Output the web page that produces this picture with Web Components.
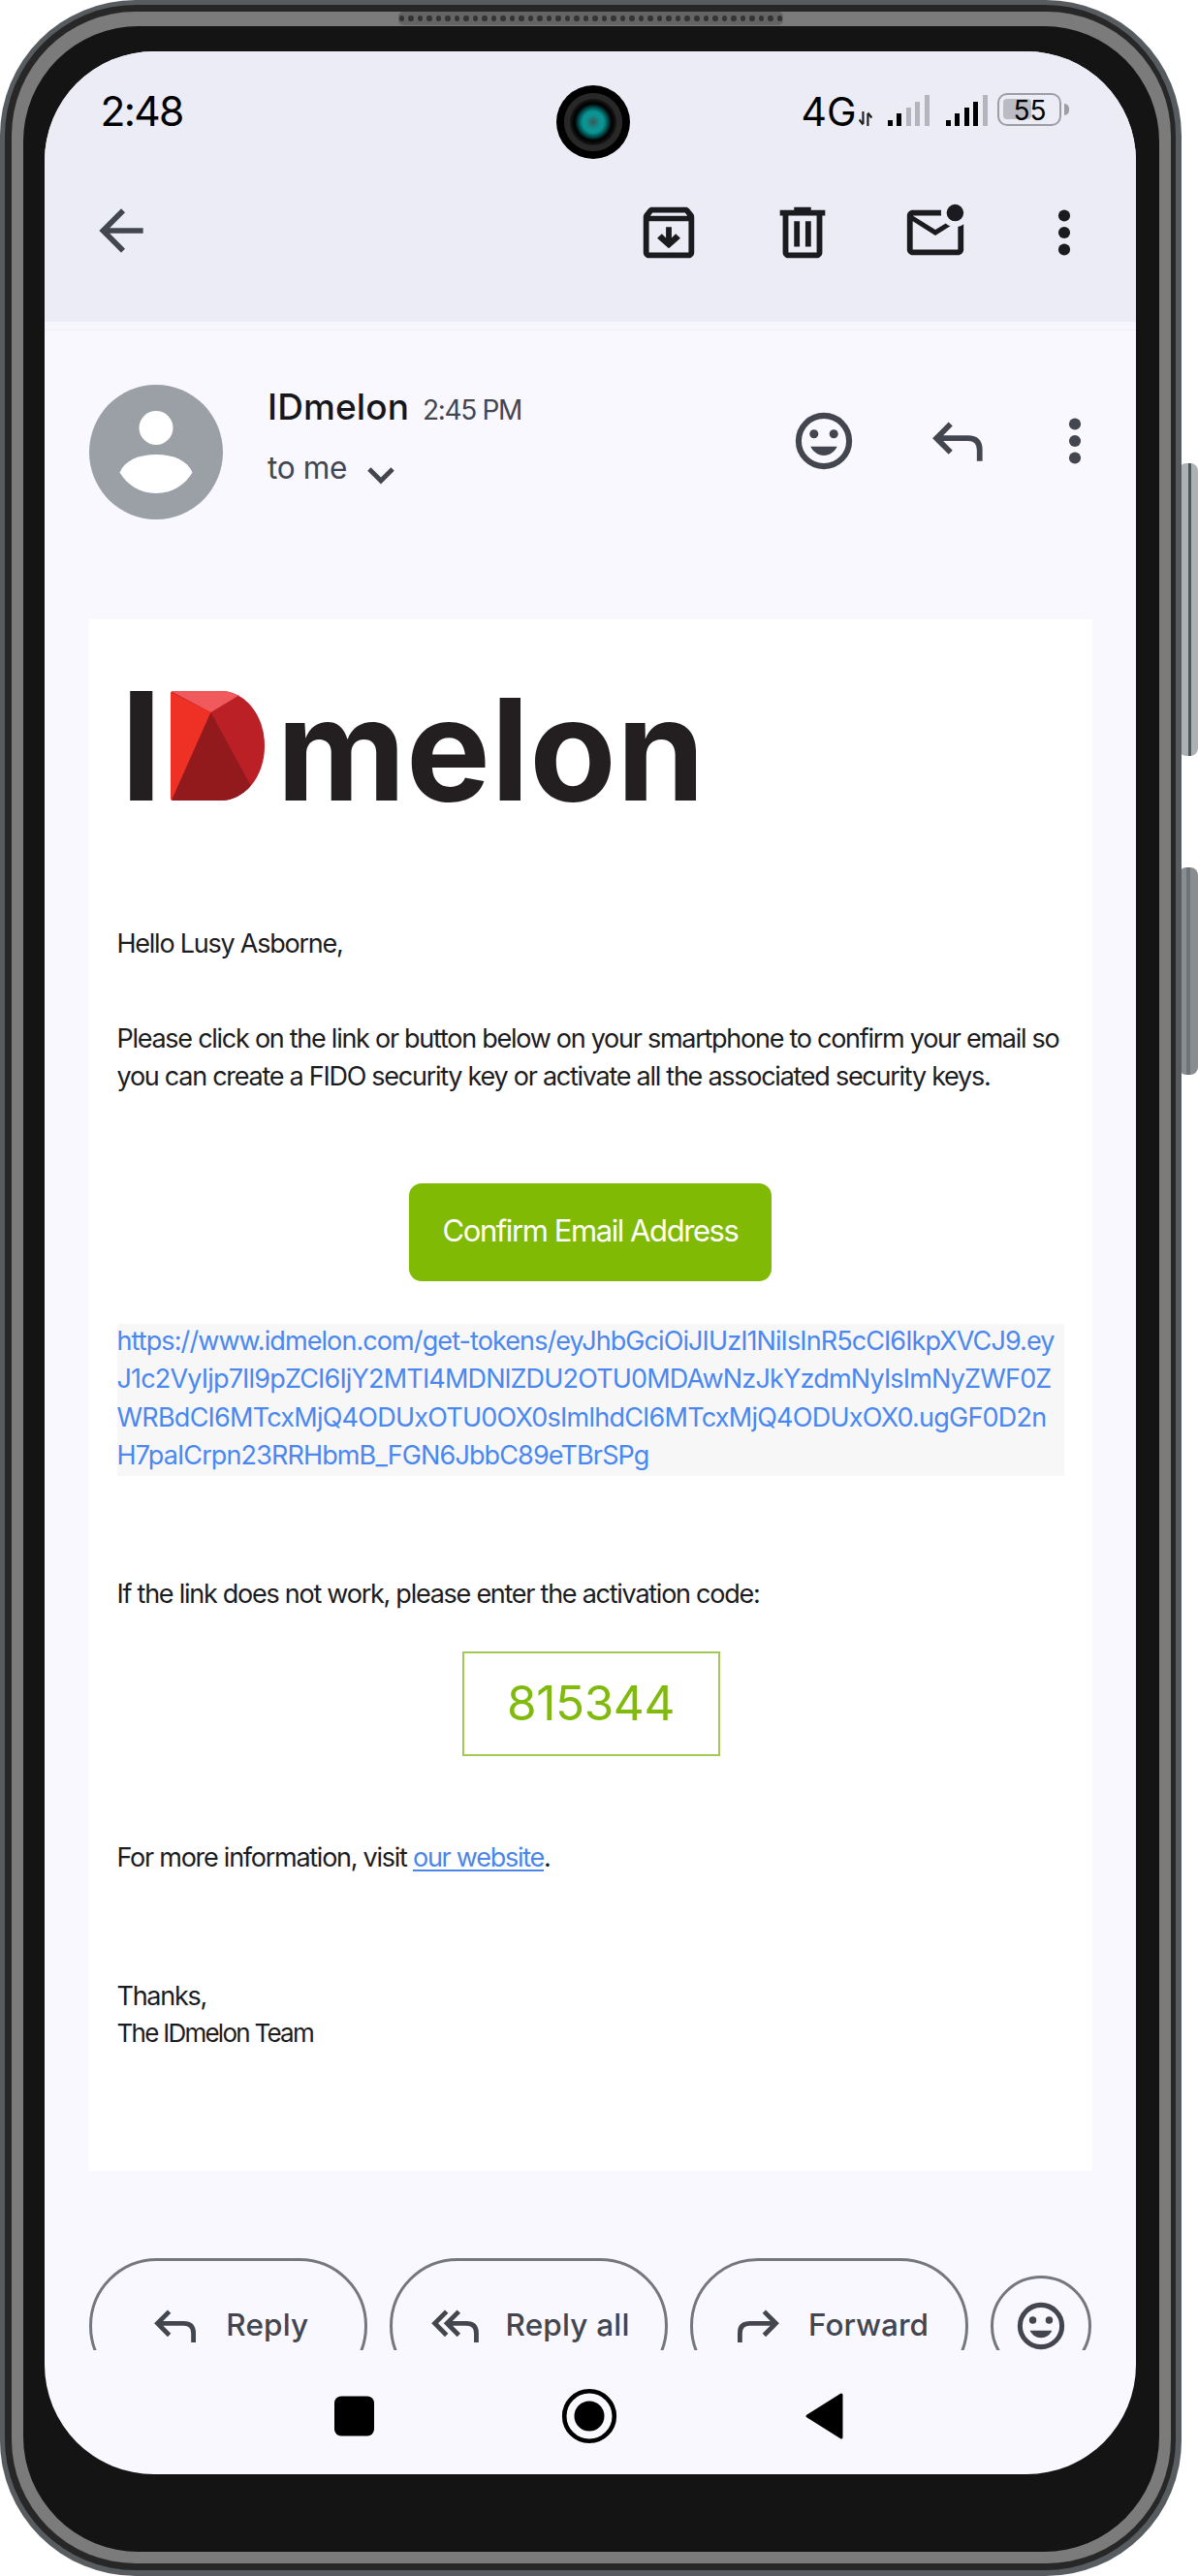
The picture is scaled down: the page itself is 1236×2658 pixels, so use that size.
<!DOCTYPE html>
<html lang="en">
<head>
<meta charset="utf-8">
<title>IDmelon mail</title>
<style>
html,body{margin:0;background:#fff}
body{font-family:Inter,"Liberation Sans",sans-serif;width:1236px;height:2658px;overflow:hidden}
</style>
</head>
<body>
<phone-frame>
  <status-bar></status-bar>
  <app-bar></app-bar>
  <message-head></message-head>
  <mail-card></mail-card>
  <reply-bar></reply-bar>
  <nav-bar></nav-bar>
</phone-frame>
<script>
function define(name, html, setup) {
  const t = document.createElement('template');
  t.innerHTML = html;
  customElements.define(name, class extends HTMLElement {
    connectedCallback() {
      if (this.shadowRoot) return;
      this.attachShadow({mode: 'open'}).appendChild(t.content.cloneNode(true));
      if (setup) setup(this, this.shadowRoot);
    }
  });
}

const face = '<circle cx="12" cy="12" r="8.95" fill="none" stroke="currentColor" stroke-width="2.1"/><circle cx="8.5" cy="9.5" r="1.55"/><circle cx="15.5" cy="9.5" r="1.55"/><path d="M7.3 14h9.4c-.9 1.9-2.6 3.1-4.7 3.1S8.2 15.900 7.300 14z"/>';
const icons = {
  back: '<path d="M20 11H7.830l5.590-5.590L12 4l-8 8 8 8 1.410-1.410L7.830 13H20z"/>',
  archive: '<path d="M20.540 5.230l-1.390-1.680C18.880 3.210 18.470 3 18 3H6c-.47 0-.88.21-1.160.55L3.460 5.230C3.170 5.570 3 6.020 3 6.500V19c0 1.100.9 2 2 2h14c1.100 0 2-.9 2-2V6.500c0-.48-.17-.93-.46-1.270zM6.240 5h11.520l.83 1.100H5.420zM5 19V8h14v11z"/><path d="M13 10h-2v3.900l-1.450-1.450L7.900 14l4.100 3.600 4.100-3.600-1.650-1.550L13 13.900z"/>',
  trash: '<path fill-rule="evenodd" d="M9 3v1H4v2h1v13c0 1.100.9 2 2 2h10c1.100 0 2-.9 2-2V6h1V4h-5V3zM7 6h10v13H7zM9 8v9h2V8zm4 0v9h2V8z"/>',
  unread: '<path d="M22 8.980V18c0 1.100-.9 2-2 2H4c-1.100 0-2-.9-2-2V6c0-1.100.9-2 2-2h10.100c-.06.32-.1.66-.1 1s.04.68.1 1H4l8 5 3.670-2.290c.47.43 1.020.76 1.630.98L12 13 4 8v10h16V9.900c.74-.15 1.420-.48 2-.92z"/><circle cx="19" cy="5" r="3"/>',
  more: '<circle cx="12" cy="6" r="2.080"/><circle cx="12" cy="12" r="2.080"/><circle cx="12" cy="18" r="2.080"/>',
  face: face,
  reply: '<path d="M9 5.300L3.700 10.600 9 15.900M4.400 10.600H15.500q4.400 0 4.400 4.400v4.200" fill="none" stroke="currentColor" stroke-width="2.100"/>',
  replyall: '<path d="M7.300 5.300L2 10.600l5.300 5.300M12.800 5.300L7.500 10.600l5.300 5.300M8.100 10.600h8.200q4.400 0 4.400 4.400v4.200" fill="none" stroke="currentColor" stroke-width="2.100"/>',
  forward: '<path d="M15 5.300l5.300 5.300L15 15.900M19.600 10.600H8.500q-4.400 0-4.400 4.400v4.200" fill="none" stroke="currentColor" stroke-width="2.100"/>',
  chevron: '<path d="M7 9.500l5 5 5-5" fill="none" stroke="currentColor" stroke-width="2"/>'
};
define('ui-icon', '<style>:host{display:block;flex:none}svg{display:block;width:100%;height:100%;fill:currentColor}</style><svg viewBox="0 0 24 24"></svg>', (el, root) => {
  const s = el.getAttribute('size') + 'px';
  el.style.width = s; el.style.height = s;
  root.querySelector('svg').innerHTML = icons[el.getAttribute('name')] || '';
});

define('speaker-grille', `<style>:host{display:flex;justify-content:space-between;align-items:center;box-sizing:border-box;width:397px;height:14px;padding:0 .5px;border-radius:5px;background:#646464}
i{width:5.500px;height:6.500px;border-radius:50%;background:#333}</style>`, (el, root) => {
  for (let k = 0; k < 42; k++) root.appendChild(document.createElement('i'));
});

define('phone-frame', `<style>
:host{display:block;position:relative;isolation:isolate;width:1236px;height:2658px}
div{box-sizing:border-box}
.slate{width:1219px;height:2658px;border-radius:140px;background:#575c60;padding:5px 6px 6px 5px}
.dark{height:100%;border-radius:135px;background:#272727;padding:7px 5px 7px 7px}
.rim{height:100%;border-radius:128px;background:#7b7b7b;padding:15px 12px 12px 12px}
.bezel{height:100%;border-radius:119px;background:#141414;padding:26px 24px 80px 22px}
.screen{height:100%;border-radius:113px;background:#f9f8fe;overflow:hidden;display:flex;flex-direction:column}
.key{position:absolute;right:0;width:20px;border-radius:8px;z-index:-1}
.vol{top:478px;height:302px;background:linear-gradient(90deg,#adb1b4 10px,#4b565b 10px 13px,#adb1b4 13px)}
.pow{top:895px;height:214px;background:linear-gradient(90deg,#898d90 8px,#6d7477 8px 12px,#898d90 12px)}
speaker-grille{position:absolute;left:411px;top:12px}
.cam{position:absolute;left:573.500px;top:87.500px;width:76px;height:76px;border-radius:50%;background:radial-gradient(circle,#35585a 0,#129090 7px,#089494 11px,#045050 15px,#000 19px,#080808 21px,#161616 23.500px,#282828 24.500px,#282828 29.500px,#000 30.500px)}
</style>
<div class="key vol"></div><div class="key pow"></div>
<div class="slate"><div class="dark"><div class="rim"><div class="bezel"><div class="screen"><slot></slot></div></div></div></div></div>
<speaker-grille></speaker-grille><div class="cam"></div>`);

define('signal-bars', `<style>:host{display:flex;align-items:flex-end;gap:4.600px;height:33px}i{width:4.900px;background:#b4b4bd}i.on{background:#000}</style>`, (el, root) => {
  [6, 13, 19, 25.500, 32.500].forEach((h, k) => {
    const i = document.createElement('i');
    i.style.height = h + 'px';
    if (k < +el.getAttribute('level')) i.className = 'on';
    root.appendChild(i);
  });
});

define('status-bar', `<style>
:host{display:flex;box-sizing:border-box;height:122px;background:#ececf7;padding:34px 69px 0 57.500px;color:#000;align-items:flex-start;flex:none}
.time{font-size:42.500px;line-height:56px}
.net{font-size:41px;line-height:57px;margin-left:638px}
svg{display:block;width:14px;height:15px;margin:28px 0 0 2.500px}
.s1{margin:10px 0 0 16px}.s2{margin:10px 0 0 17px}
.bat{box-sizing:border-box;width:67px;height:34px;border:2.500px solid #9d9da5;border-radius:10px;margin:9px 0 0 10px;padding:4px;display:flex}
.fill{width:29px;height:21px;border-radius:4px;background:#bbbbc4;flex:none}
.pct{font-size:28px;line-height:24px;margin-left:-18px}
.tip{width:5px;height:12px;border-radius:0 6px 6px 0;background:#9d9da5;margin:20px 0 0 3px}
</style>
<fit-line class="time" w="85">2:48</fit-line><fit-line class="net" w="57">4G</fit-line>
<svg viewBox="0 0 14 15"><path d="M4.500 0v13M.5 8.500l4 5M9.500 15V2M13.500 6.500l-4-5" fill="none" stroke="#222" stroke-width="2.200"/></svg>
<signal-bars class="s1" level="2"></signal-bars><signal-bars class="s2" level="4"></signal-bars>
<div class="bat"><div class="fill"></div><fit-line class="pct" w="34">55</fit-line></div><div class="tip"></div>`);

define('app-bar', `<style>
:host{display:flex;box-sizing:border-box;height:165px;flex:none;padding:30px 0 0 45px;color:#1b1b1f;background:linear-gradient(#ececf7 156px,#f7f6fd 156px 163px,#f9f8fe 163px)}
:host{height:165px;background:linear-gradient(#ececf7 0 156.500px,#f7f6fd 156.500px 164px,#f9f8fe 164px);box-shadow:inset 0 -79px 0 -78px transparent}
.back{color:#44464f;margin-top:-1.500px}.a{margin-left:496px}.b{margin-left:67.500px}.m{margin-left:62.500px}
</style>
<ui-icon class="back" name="back" size="68"></ui-icon><ui-icon class="a" name="archive" size="70"></ui-icon><ui-icon class="b" name="trash" size="70"></ui-icon><ui-icon class="b" name="unread" size="70"></ui-icon><ui-icon class="m" name="more" size="70"></ui-icon>`);

define('message-head', `<style>
:host{display:flex;box-sizing:border-box;height:299px;flex:none;padding:56px 0 0 46px;color:#44464f;border-top:1px solid #efeef5}
.av{width:138px;height:139px;flex:none;display:block}
.who{margin-left:46px;width:330px;padding-top:1px}
.row{display:flex;align-items:baseline}
.name{font-size:37px;font-weight:500;color:#17171b;line-height:44px}
.at{font-size:28px;margin-left:14px}
.to{display:flex;margin-top:21px}
.to fit-line{font-size:31.500px;line-height:40px}
.to ui-icon{margin:-2px 0 0 5.500px}
.f{margin-left:209px;margin-top:23px}.r{margin-left:71.400px;margin-top:26px}.m{margin-left:51.600px;margin-top:23px}
</style>
<svg class="av" viewBox="0 0 138 139"><ellipse cx="69" cy="69.500" rx="69" ry="69.500" fill="#9aa0a6"/><circle cx="69" cy="44.500" r="17.500" fill="#fff"/><path d="M31.500 90.500C37 78 51 72 69 72s32 6 37.500 18.500C99 103 86 112 69 112s-30-9-37.500-21.500z" fill="#fff"/></svg>
<div class="who"><div class="row"><fit-line class="name" w="146">IDmelon</fit-line><fit-line class="at" w="102">2:45 PM</fit-line></div>
<div class="to"><fit-line w="82">to me</fit-line><ui-icon name="chevron" size="58"></ui-icon></div></div>
<ui-icon class="f" name="face" size="70"></ui-icon><ui-icon class="r" name="reply" size="66"></ui-icon><ui-icon class="m" name="more" size="70"></ui-icon>`);

define('melon-logo', `<style>
:host{display:flex;height:113px;font-weight:700;color:#231f20;align-items:flex-start}
.i{font-size:155px;line-height:113px;width:52px;margin-left:-10px}
.gem{width:97px;height:113px;border-radius:3px 45px 45px 3px / 3px 56px 56px 3px;overflow:hidden;flex:none;margin-left:0}
svg{display:block}
.w{font-size:146px;line-height:120px;margin-left:12.500px}
</style>
<span class="i">I</span>
<div class="gem"><svg width="97" height="113" viewBox="0 0 97 113"><path fill="#ba2026" d="M0 0h97v113H0z"/><path fill="#f15a5c" d="M0 0h78L41.500 22z"/><path fill="#ee3124" d="M0 1l41.500 21L1 113H0z"/><path fill="#92191c" d="M41.500 22L1 113h90z"/></svg></div>
<fit-line class="w" w="442">melon</fit-line>`);

define('mail-card', `<style>
:host{display:flex;flex-direction:column;box-sizing:border-box;width:1035px;height:1601px;margin-left:46px;background:#fff;flex:none;padding:74px 0 0 28.500px;font-size:27px;line-height:39.500px;color:#1c1c1f}
melon-logo{margin-left:13.500px}
.hello{margin-top:128px}
.para{margin-top:58px;display:flex;flex-direction:column}
.btn{align-self:flex-start;box-sizing:border-box;width:374px;height:101px;margin:90px 0 0 301.500px;border-radius:13px;background:#80ba04;color:#fff;font-size:31px;line-height:97px;display:flex;justify-content:center}
.link{width:977px;box-sizing:border-box;margin:44px 0 0 .5px;height:157px;background:#f7f7f8;color:#4a88f0;line-height:36.400px;display:flex;flex-direction:column;gap:3.200px}
.link fit-line{margin-left:-.5px}
.alt{margin-top:102px}
.code{box-sizing:border-box;width:266px;height:108px;border:2px solid #a3c955;margin:40px 0 0 356px;color:#80ba0c;font-size:49.500px;line-height:102px;display:flex;justify-content:center}
.info{margin-top:85px}
a{color:#4a86e8;text-decoration:underline;text-decoration-thickness:2px;text-underline-offset:3px}
.sign{margin-top:104px;display:flex;flex-direction:column;line-height:38px}
.team{font-size:26px}
fit-line{align-self:flex-start}
</style>
<melon-logo></melon-logo>
<fit-line class="hello" w="233">Hello Lusy Asborne,</fit-line>
<div class="para"><fit-line w="972">Please click on the link or button below on your smartphone to confirm your email so</fit-line><fit-line w="901">you can create a FIDO security key or activate all the associated security keys.</fit-line></div>
<div class="btn"><fit-line w="305">Confirm Email Address</fit-line></div>
<div class="link"><fit-line w="967">https://www.idmelon.com/get-tokens/eyJhbGciOiJIUzI1NiIsInR5cCI6IkpXVCJ9.ey</fit-line><fit-line w="964">J1c2VyIjp7Il9pZCI6IjY2MTI4MDNlZDU2OTU0MDAwNzJkYzdmNyIsImNyZWF0Z</fit-line><fit-line w="959">WRBdCI6MTcxMjQ4ODUxOTU0OX0sImlhdCI6MTcxMjQ4ODUxOX0.ugGF0D2n</fit-line><fit-line w="549">H7paICrpn23RRHbmB_FGN6JbbC89eTBrSPg</fit-line></div>
<fit-line class="alt" w="663">If the link does not work, please enter the activation code:</fit-line>
<div class="code"><fit-line w="173">815344</fit-line></div>
<fit-line class="info" w="447">For more information, visit <a>our website</a>.</fit-line>
<div class="sign"><fit-line w="92.500">Thanks,</fit-line><fit-line class="team" w="202.500">The IDmelon Team</fit-line></div>`);

define('pill-button', `<style>:host{display:flex;box-sizing:border-box;width:287px;height:140px;border:3px solid #74777f;border-radius:70px;flex:none;font-size:31.500px;line-height:40px;font-weight:500}
ui-icon{margin-top:40px}::slotted(*){margin-top:46px}</style><slot></slot>`, (el, root) => {
  const i = document.createElement('ui-icon');
  i.setAttribute('name', el.getAttribute('icon'));
  i.setAttribute('size', '55');
  i.style.marginLeft = el.getAttribute('lead') + 'px';
  i.style.marginRight = el.getAttribute('trail') + 'px';
  root.insertBefore(i, root.querySelector('slot'));
});

define('reply-bar', `<style>
:host{display:flex;box-sizing:border-box;height:185px;padding:90px 0 0 46px;gap:23px;overflow:hidden;flex:none;color:#44464f}
.em{box-sizing:border-box;width:104px;height:104px;border:3px solid #74777f;border-radius:50%;margin:18px 0 0 0;padding:20px;flex:none}
</style>
<pill-button icon="reply" lead="59" trail="24.300"><fit-line w="85">Reply</fit-line></pill-button>
<pill-button icon="replyall" lead="39" trail="22.500"><fit-line w="128">Reply all</fit-line></pill-button>
<pill-button icon="forward" lead="39" trail="25"><fit-line w="124">Forward</fit-line></pill-button>
<div class="em"><ui-icon name="face" size="58"></ui-icon></div>`);

define('nav-bar', `<style>:host{display:flex;flex:1;padding:38px 0 0 299px}svg{display:block;flex:none;height:60px}.b{margin-left:192px}.c{margin-left:189px}</style>
<svg width="41" viewBox="0 0 41 60"><rect y="9.500" width="41" height="41" rx="7"/></svg>
<svg class="b" width="60" viewBox="0 0 60 60"><circle cx="30" cy="30" r="25.800" fill="none" stroke="#000" stroke-width="4.600"/><circle cx="30" cy="30" r="15.500"/></svg>
<svg class="c" width="44" viewBox="0 0 44 60"><path d="M6 30L41 8v44z" stroke="#000" stroke-width="3" stroke-linejoin="round"/></svg>`);

/* One line of text, tracked so that it fills the width given in "w". */
define('fit-line', '<style>:host{display:block;white-space:nowrap;width:max-content;flex:none}</style><slot></slot>', el => {
  const target = +el.getAttribute('w');
  const width = el.getBoundingClientRect().width;
  el.style.letterSpacing = ((target - width) / el.textContent.length).toFixed(3) + 'px';
  el.style.width = target + 'px';
});
</script>
</body>
</html>
